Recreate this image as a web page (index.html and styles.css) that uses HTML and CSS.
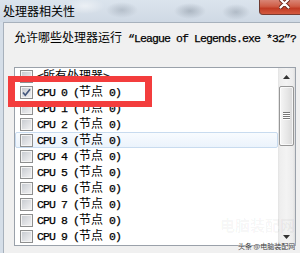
FILE: index.html
```html
<!DOCTYPE html>
<html>
<head>
<meta charset="utf-8">
<link rel="stylesheet" href="styles.css">
</head>
<body>
<div class="window">
  <div class="titlebar">
    <div class="title">处理器相关性</div>
    <div class="close">
      <svg width="11" height="10" viewBox="0 0 11 10"><path d="M1.5 0.5 L9.5 8.5 M9.5 0.5 L1.5 8.5" stroke="#6a2418" stroke-width="4" stroke-linecap="round"/><path d="M1.5 0.5 L9.5 8.5 M9.5 0.5 L1.5 8.5" stroke="#ffffff" stroke-width="2.2" stroke-linecap="round"/></svg>
    </div>
  </div>
  <div class="client">
    <div class="prompt t"><span class="zh">允许哪些处理器运行</span> “League of Legends.exe *32”?</div>
    <div class="list">
      <ul class="items">
        <li class="row"><span class="cb"></span><span class="t">&lt;<span class="zh">所有处理器</span>&gt;</span></li>
        <li class="row"><span class="cb"><svg width="11" height="11" viewBox="0 0 11 11"><path d="M2 5.5 L4.3 8.2 L9 2.2" fill="none" stroke="#44577c" stroke-width="1.7"/></svg></span><span class="t">CPU 0 (<span class="zh">节点</span> 0)</span></li>
        <li class="row"><span class="cb"></span><span class="t">CPU 1 (<span class="zh">节点</span> 0)</span></li>
        <li class="row"><span class="cb"></span><span class="t">CPU 2 (<span class="zh">节点</span> 0)</span></li>
        <li class="row hover"><span class="cb"></span><span class="t">CPU 3 (<span class="zh">节点</span> 0)</span></li>
        <li class="row"><span class="cb"></span><span class="t">CPU 4 (<span class="zh">节点</span> 0)</span></li>
        <li class="row"><span class="cb"></span><span class="t">CPU 5 (<span class="zh">节点</span> 0)</span></li>
        <li class="row"><span class="cb"></span><span class="t">CPU 6 (<span class="zh">节点</span> 0)</span></li>
        <li class="row"><span class="cb"></span><span class="t">CPU 7 (<span class="zh">节点</span> 0)</span></li>
        <li class="row"><span class="cb"></span><span class="t">CPU 8 (<span class="zh">节点</span> 0)</span></li>
        <li class="row"><span class="cb"></span><span class="t">CPU 9 (<span class="zh">节点</span> 0)</span></li>
      </ul>
      <div class="scrollbar">
        <div class="sbtn"><svg width="7" height="4" viewBox="0 0 7 4"><path d="M0 4 L3.5 0 L7 4 Z" fill="#333"/></svg></div>
        <div class="thumb"><svg width="7" height="8" viewBox="0 0 7 8"><path d="M0 0.5 H7 M0 2.5 H7 M0 4.5 H7 M0 6.5 H7" stroke="#777" stroke-width="1"/><path d="M0 1.5 H7 M0 3.5 H7 M0 5.5 H7 M0 7.5 H7" stroke="#fff" stroke-width="1"/></svg></div>
        <div class="track"></div>
        <div class="sbtn"><svg width="7" height="4" viewBox="0 0 7 4"><path d="M0 0 L3.5 4 L7 0 Z" fill="#333"/></svg></div>
      </div>
      <div class="wm-big">电脑装配网</div>
    </div>
  </div>
  <div class="redbox"></div>
  <div class="wm-small">头条 @电脑装配网</div>
</div>
</body>
</html>
```

FILE: styles.css
```css
html, body {
  margin: 0;
  padding: 0;
  width: 300px;
  height: 253px;
  overflow: hidden;
}

body {
  background: #d5dee8;
  font-family: "Noto Sans CJK SC", sans-serif;
  color: #000;
}

.window {
  position: relative;
  display: flex;
  flex-direction: column;
  width: 300px;
  height: 253px;
}

.titlebar {
  height: 22px;
  display: flex;
  align-items: flex-start;
  background:
    radial-gradient(ellipse 16px 8px at 122px 10px, rgba(120,132,146,.35), transparent),
    radial-gradient(ellipse 16px 8px at 190px 11px, rgba(110,122,136,.40), transparent),
    radial-gradient(ellipse 14px 8px at 236px 12px, rgba(110,122,136,.35), transparent),
    radial-gradient(ellipse 20px 8px at 85px 6px, rgba(255,255,255,.5), transparent),
    linear-gradient(#dbe4ed, #cfd9e4);
}

.title {
  flex: 1;
  padding-left: 3px;
  font-size: 12px;
  line-height: 22px;
  color: #000;
}

.close {
  width: 41px;
  height: 15px;
  box-sizing: border-box;
  display: flex;
  align-items: flex-start;
  padding-left: 19px;
  border-left: 1px solid #6e3a30;
  border-bottom: 1px solid #7a3b30;
  border-bottom-left-radius: 4px;
  background: linear-gradient(#d98575 0%, #cf5d46 45%, #c13c25 60%, #d45a40 100%);
}

.close svg {
  display: block;
  margin-top: -1px;
}

.client {
  flex: 1;
  margin-left: 3px;
  border-left: 1px solid #a7b1bc;
  border-top: 1px solid #a7b1bc;
  background: #f0f0f0;
  padding: 7px 0 0 10px;
}

.t {
  font-family: "Liberation Mono", "Noto Sans CJK SC", monospace;
  font-size: 11.5px;
  letter-spacing: -0.9px;
  -webkit-text-stroke: 0.25px #000;
}

.zh {
  font-family: "Noto Sans CJK SC", sans-serif;
  font-size: 12px;
  letter-spacing: 0;
  -webkit-text-stroke: 0;
}

.prompt {
  height: 14px;
  line-height: 14px;
  white-space: nowrap;
}

.list {
  position: relative;
  margin-top: 23px;
  width: 282px;
  height: 179px;
  box-sizing: border-box;
  border: 1px solid #9aa1aa;
  background: #fff;
  display: flex;
}

.items {
  flex: 1;
  margin: 0;
  padding: 0;
  list-style: none;
}

.row {
  height: 16px;
  box-sizing: border-box;
  display: flex;
  align-items: center;
  padding-left: 5px;
  line-height: 16px;
  white-space: nowrap;
}

.row.hover {
  border: 1px solid #c8dbef;
  border-radius: 2px;
  padding-left: 4px;
  background: linear-gradient(#f8fbfe, #ebf3fc);
}

.cb {
  width: 13px;
  height: 13px;
  box-sizing: border-box;
  border: 1px solid #8e8f8f;
  margin-right: 4px;
  background: linear-gradient(135deg, #c4c8ce, #f4f4f5);
  box-shadow: inset 0 0 0 1px #f4f4f4;
  flex: none;
  position: relative;
}

.cb svg {
  display: block;
  position: absolute;
  left: 0;
  top: 0;
}

.scrollbar {
  width: 17px;
  display: flex;
  flex-direction: column;
  background: linear-gradient(to right, #e3e3e3 0, #eeeeee 2px, #f3f3f3 50%, #ececec 15px, #dedede 100%);
}

.sbtn {
  height: 17px;
  display: flex;
  align-items: center;
  justify-content: center;
  flex: none;
}

.thumb {
  height: 60px;
  margin: 1px 1px 0 1px;
  box-sizing: border-box;
  border: 1px solid #979797;
  border-radius: 2px;
  background: linear-gradient(to right, #f6f6f6, #e8e8e8 50%, #d9d9d9);
  box-shadow: inset 0 0 0 1px rgba(255,255,255,.7);
  display: flex;
  align-items: center;
  justify-content: center;
  flex: none;
}

.thumb svg {
  display: block;
}

.track {
  flex: 1;
}

.wm-big {
  position: absolute;
  left: 205px;
  top: 146px;
  font-size: 15px;
  font-weight: 700;
  color: rgba(0, 0, 0, 0.045);
  white-space: nowrap;
}

.redbox {
  position: absolute;
  left: 8px;
  top: 76px;
  width: 144px;
  height: 31px;
  box-sizing: border-box;
  border-style: solid;
  border-color: #f33d3d;
  border-width: 6px 7px;
}

.wm-small {
  position: absolute;
  left: 238px;
  top: 241px;
  font-size: 7px;
  line-height: 10px;
  color: #3c3c3c;
  white-space: nowrap;
  text-shadow: 0 0 1px #fff, 0 0 2px #fff;
}
```
